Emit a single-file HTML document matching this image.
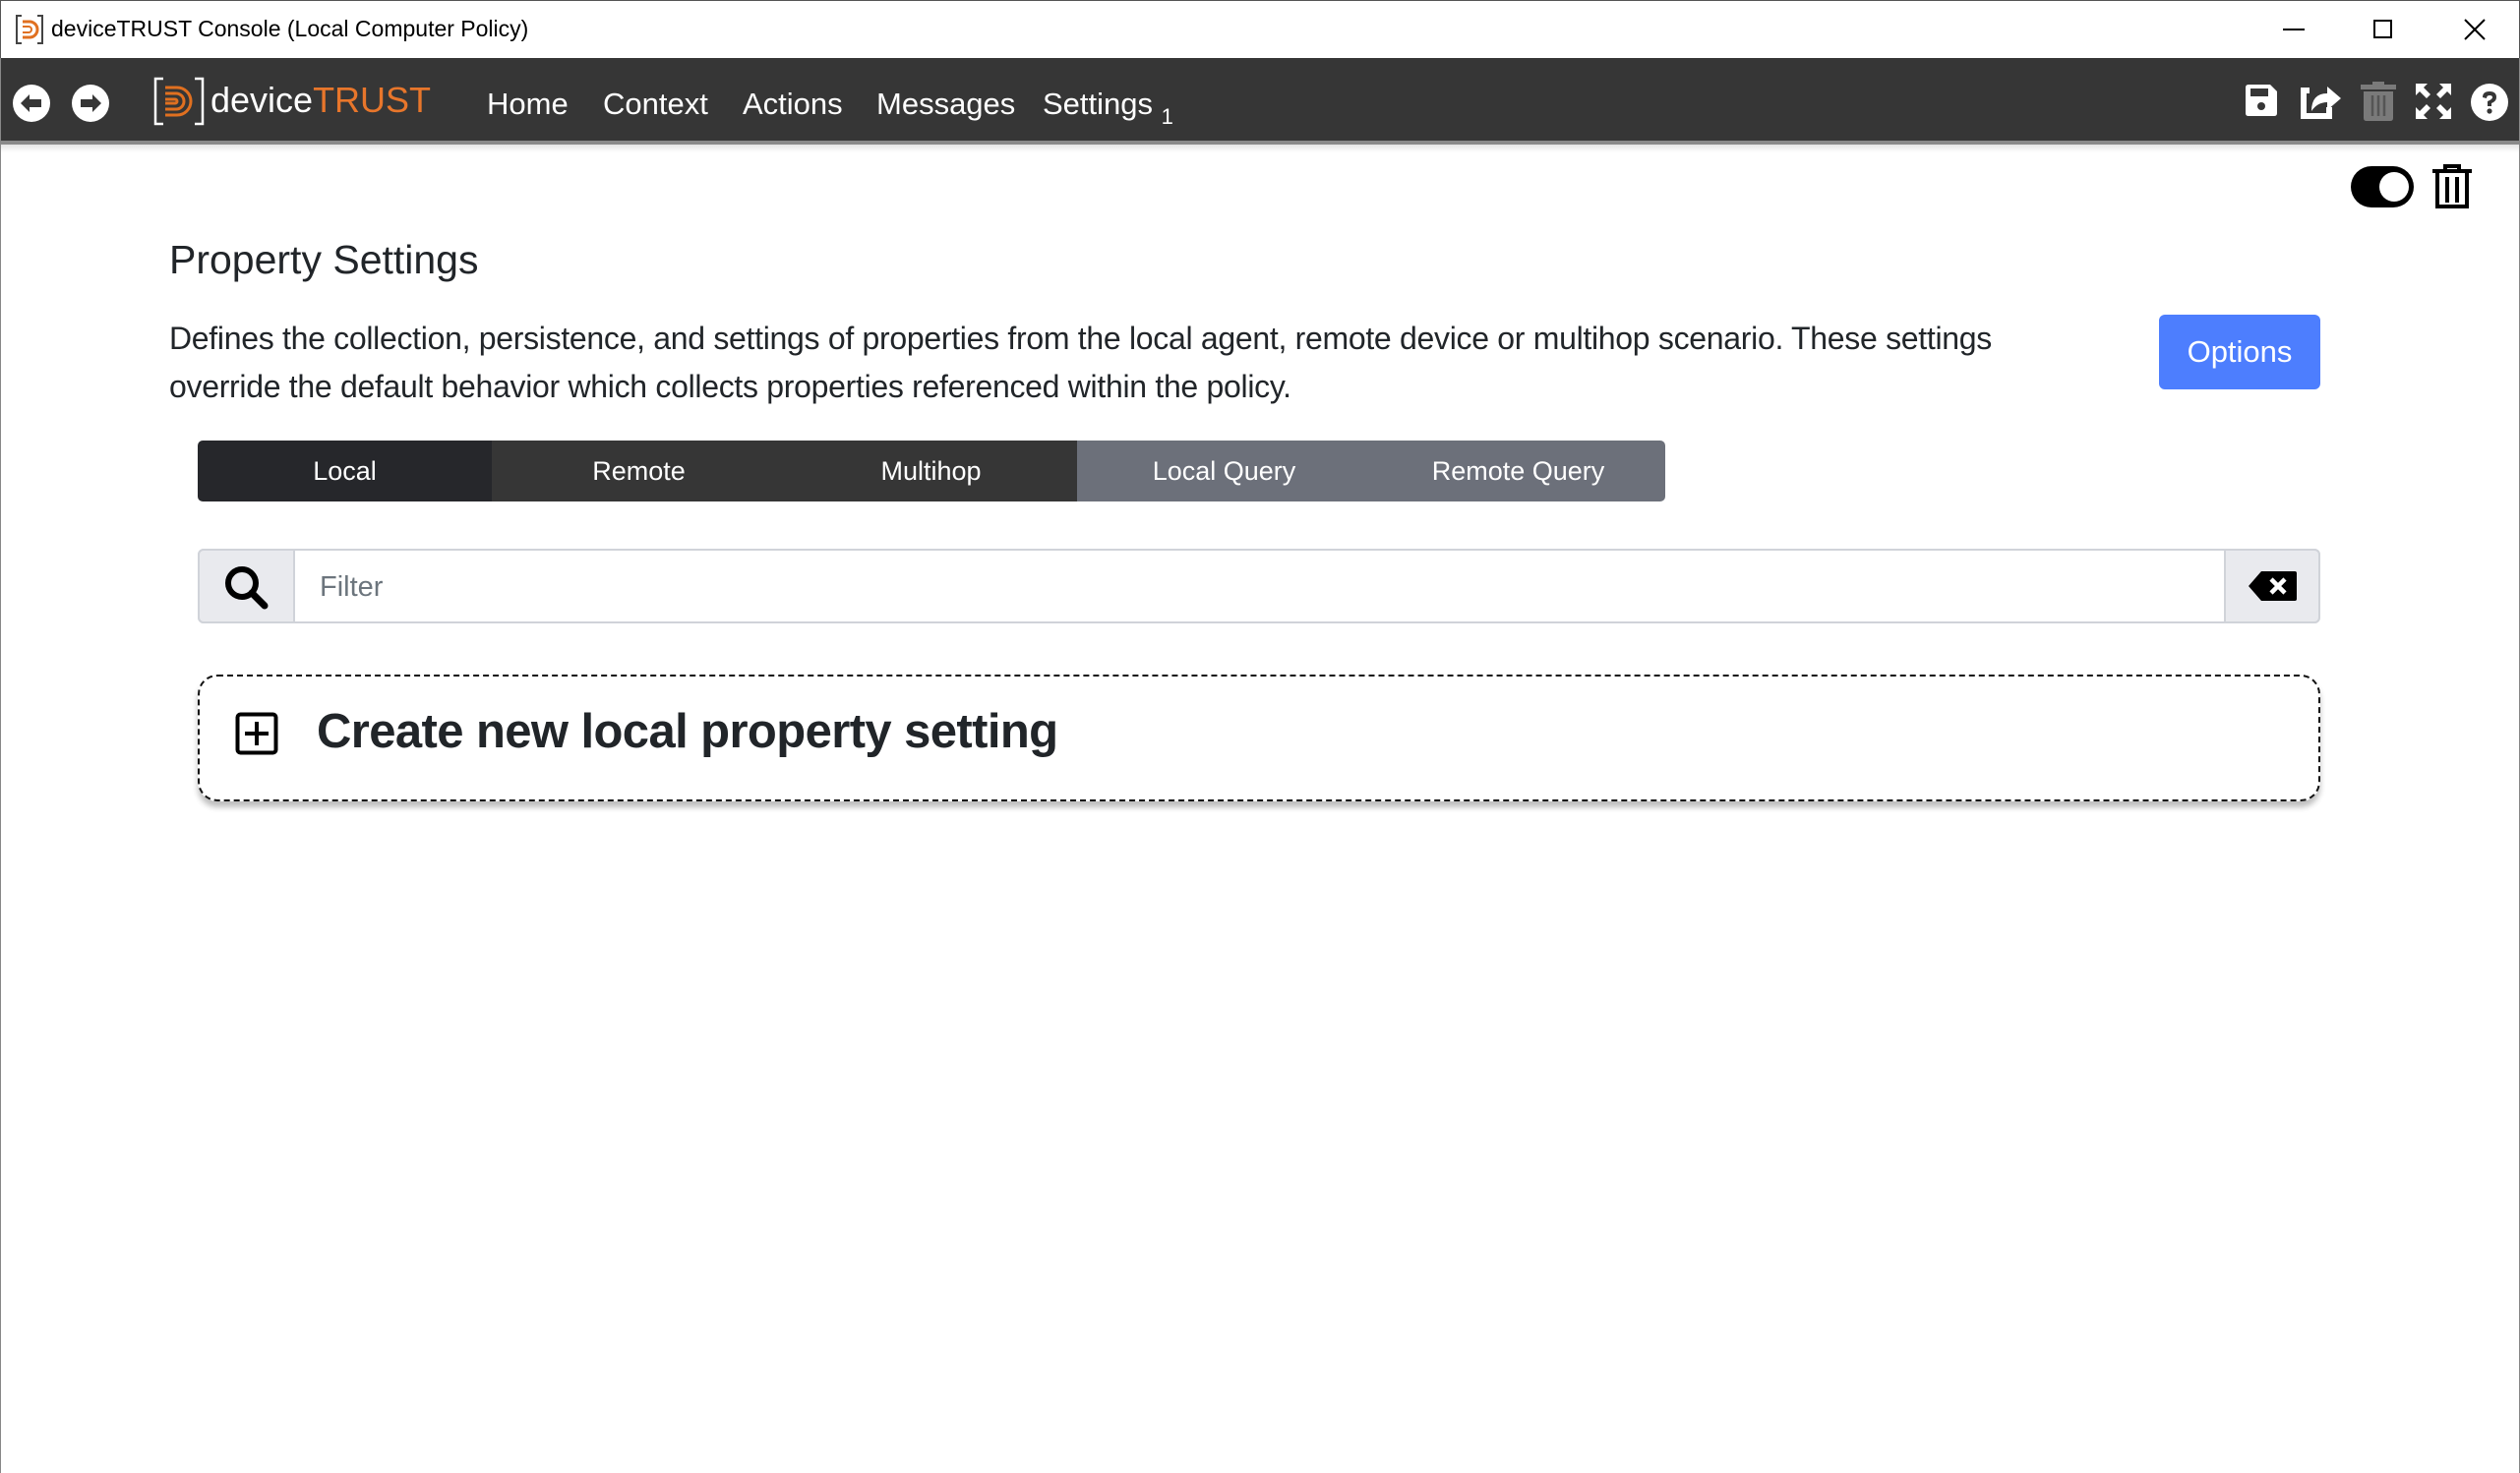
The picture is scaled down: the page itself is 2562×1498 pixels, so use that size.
<!DOCTYPE html>
<html><head><meta charset="utf-8">
<style>
*{box-sizing:border-box;margin:0;padding:0}
body{width:2562px;height:1498px;overflow:hidden;background:#fff;font-family:"Liberation Sans",sans-serif;position:relative;color:#212529}
.abs{position:absolute}
#title{left:0;top:0;width:2562px;height:59px;background:#fff;border-top:1px solid #555;border-left:1px solid #555;border-right:1px solid #555}
#nav{left:0;top:59px;width:2562px;height:88px;background:#363636;border-bottom:4px solid #8a8a8a}
.navt{color:#fff;font-size:31px}
.tab{top:448px;height:62px;color:#fff;font-size:27px;display:flex;align-items:center;justify-content:center;width:299px}
</style></head><body>
<div id="title" class="abs">
  <svg class="abs" style="left:14px;top:13px" width="30" height="32" viewBox="0 0 30 32"><path d="M7 2H2V30H7M23 2H28V30H23" stroke="#444" stroke-width="2" fill="none"/><path d="M8 8h7a8 8 0 0 1 0 16H8" stroke="#e07020" stroke-width="3" fill="none"/><path d="M8 13h6a3 3 0 0 1 0 6H8" stroke="#e07020" stroke-width="2" fill="none"/></svg>
  <div class="abs" style="left:51px;top:15px;font-size:23px;color:#000">deviceTRUST Console (Local Computer Policy)</div>
  <div class="abs" style="left:2320px;top:28px;width:22px;height:2px;background:#000"></div>
  <div class="abs" style="left:2412px;top:19px;width:19px;height:19px;border:2px solid #000"></div>
  <svg class="abs" style="left:2504px;top:18px" width="22" height="22"><path d="M1 1L21 21M21 1L1 21" stroke="#000" stroke-width="2"/></svg>
</div>
<div id="nav" class="abs">
  <svg class="abs" style="left:12px;top:26px" width="40" height="40" viewBox="0 0 40 40"><circle cx="20" cy="20" r="19" fill="#fff"/><path d="M9 20L18 11V16H30V24H18V29Z" fill="#363636"/></svg>
  <svg class="abs" style="left:72px;top:26px" width="40" height="40" viewBox="0 0 40 40"><circle cx="20" cy="20" r="19" fill="#fff"/><path d="M31 20L22 11V16H10V24H22V29Z" fill="#363636"/></svg>
  <svg class="abs" style="left:156px;top:19px" width="52" height="50" viewBox="0 0 52 50"><path d="M10 2H2V48H10M42 2H50V48H42" stroke="#fff" stroke-width="2.5" fill="none"/><path d="M12 11h12a14 14 0 0 1 0 28H12" stroke="#e07020" stroke-width="3" fill="none"/><path d="M12 17h11a8 8 0 0 1 0 16H12" stroke="#e07020" stroke-width="3" fill="none"/><path d="M12 23h10a2 2 0 0 1 0 4H12" stroke="#e07020" stroke-width="3" fill="none"/></svg>
  <div class="abs" style="left:214px;top:22px;font-size:36px;color:#fff">device<span style="color:#e8762b">TRUST</span></div>
  <div class="abs navt" style="left:495px;top:29px">Home</div>
  <div class="abs navt" style="left:613px;top:29px">Context</div>
  <div class="abs navt" style="left:755px;top:29px">Actions</div>
  <div class="abs navt" style="left:891px;top:29px">Messages</div>
  <div class="abs navt" style="left:1060px;top:29px">Settings <span style="font-size:22px;position:relative;top:10px">1</span></div>
  <svg class="abs" style="left:2281px;top:25px" width="36" height="36" viewBox="0 0 36 36"><path d="M2 5Q2 2 5 2H27L34 9V31Q34 34 31 34H5Q2 34 2 31Z" fill="#fff"/><rect x="7" y="6" width="18" height="8" fill="#363636"/><circle cx="18" cy="24" r="4" fill="#363636"/></svg>
  <svg class="abs" style="left:2336px;top:22px" width="46" height="42" viewBox="0 0 46 42"><path d="M3 8H12V14H9V34H29V28H35V40H3Z" fill="#fff"/><path d="M14 32Q14 14 30 14V7L44 19L30 31V23Q20 23 14 32Z" fill="#fff"/></svg>
  <svg class="abs" style="left:2400px;top:24px" width="36" height="40" viewBox="0 0 36 40"><rect x="0" y="3" width="36" height="5" fill="#7a7a7a"/><rect x="12" y="0" width="12" height="4" fill="#7a7a7a"/><path d="M3 10H33V37Q33 40 30 40H6Q3 40 3 37Z" fill="#7a7a7a"/><path d="M12 14V35M18 14V35M24 14V35" stroke="#555" stroke-width="2.5"/></svg>
  <svg class="abs" style="left:2456px;top:26px" width="36" height="36" viewBox="0 0 36 36"><g fill="#fff"><path d="M0 0H12L8 4L15 11L11 15L4 8L0 12Z"/><path d="M36 0H24L28 4L21 11L25 15L32 8L36 12Z"/><path d="M0 36H12L8 32L15 25L11 21L4 28L0 24Z"/><path d="M36 36H24L28 32L21 25L25 21L32 28L36 24Z"/></g></svg>
  <svg class="abs" style="left:2511px;top:25px" width="40" height="40" viewBox="0 0 40 40"><circle cx="20" cy="20" r="19" fill="#fff"/><path d="M13 15Q13 9 20 9Q27 9 27 15Q27 19 22 21V24H18V19Q23 17 23 15Q23 13 20 13Q17 13 17 16Z" fill="#363636"/><circle cx="20" cy="29" r="2.6" fill="#363636"/></svg>
</div>
<div class="abs" style="left:0;top:147px;width:2562px;height:8px;background:linear-gradient(#e5e5e5,#fff)"></div>
<div class="abs" style="left:2390px;top:169px;width:64px;height:42px;border-radius:21px;background:#000"></div>
<div class="abs" style="left:2419px;top:175px;width:30px;height:30px;border-radius:50%;background:#fff"></div>
<svg class="abs" style="left:2472px;top:166px" width="42" height="48" viewBox="0 0 42 48"><path d="M1 8H41M14 8V3H28V8M6 10V44H36V10M16 14V40M26 14V40" stroke="#000" stroke-width="4" fill="none"/></svg>
<div class="abs" style="left:172px;top:241px;font-size:41px;color:#212529">Property Settings</div>
<div class="abs" style="left:172px;top:320px;font-size:32px;line-height:49px;color:#212529;white-space:nowrap;letter-spacing:-0.3px">Defines the collection, persistence, and settings of properties from the local agent, remote device or multihop scenario. These settings<br>override the default behavior which collects properties referenced within the policy.</div>
<div class="abs" style="left:2195px;top:320px;width:164px;height:76px;background:#4d7efe;border-radius:6px;color:#fff;font-size:31px;display:flex;align-items:center;justify-content:center">Options</div>
<div class="abs tab" style="left:201px;background:#26272b;border-radius:5px 0 0 5px">Local</div>
<div class="abs tab" style="left:500px;background:#363636">Remote</div>
<div class="abs tab" style="left:798px;background:#363636;width:297px">Multihop</div>
<div class="abs tab" style="left:1095px;background:#6c707a">Local Query</div>
<div class="abs tab" style="left:1394px;background:#6c707a;border-radius:0 5px 5px 0">Remote Query</div>
<div class="abs" style="left:201px;top:558px;width:2158px;height:76px;border:2px solid #d0d3d9;border-radius:6px;background:#fff"></div>
<div class="abs" style="left:201px;top:558px;width:99px;height:76px;border:2px solid #d0d3d9;border-radius:6px 0 0 6px;background:#e9eaee"></div>
<svg class="abs" style="left:226px;top:573px" width="48" height="48" viewBox="0 0 48 48"><circle cx="20" cy="20" r="14" stroke="#000" stroke-width="6" fill="none"/><path d="M30 30L43 43" stroke="#000" stroke-width="7" stroke-linecap="round"/></svg>
<div class="abs" style="left:325px;top:581px;font-size:29px;color:#6c757d">Filter</div>
<div class="abs" style="left:2261px;top:558px;width:98px;height:76px;border:2px solid #d0d3d9;border-radius:0 6px 6px 0;background:#e9eaee"></div>
<svg class="abs" style="left:2286px;top:580px" width="50" height="32" viewBox="0 0 50 32"><path d="M0 16L13 1H47Q49 1 49 3V29Q49 31 47 31H13Z" fill="#000"/><path d="M23 9L37 23M37 9L23 23" stroke="#fff" stroke-width="4.5"/></svg>
<div class="abs" style="left:201px;top:686px;width:2158px;height:129px;border:2.5px dashed #111;border-radius:20px;box-shadow:0 6px 6px rgba(0,0,0,0.25)"></div>
<svg class="abs" style="left:239px;top:724px" width="44" height="44" viewBox="0 0 44 44"><rect x="2.5" y="2.5" width="39" height="39" rx="3" stroke="#000" stroke-width="4" fill="none"/><path d="M22 10V34M10 22H34" stroke="#000" stroke-width="4"/></svg>
<div class="abs" style="left:322px;top:716px;font-size:49px;font-weight:bold;color:#212529;letter-spacing:-0.6px">Create new local property setting</div>
<div class="abs" style="left:0;top:59px;width:1px;height:1439px;background:#888"></div>
<div class="abs" style="left:2561px;top:59px;width:1px;height:1439px;background:#888"></div>
</body></html>
